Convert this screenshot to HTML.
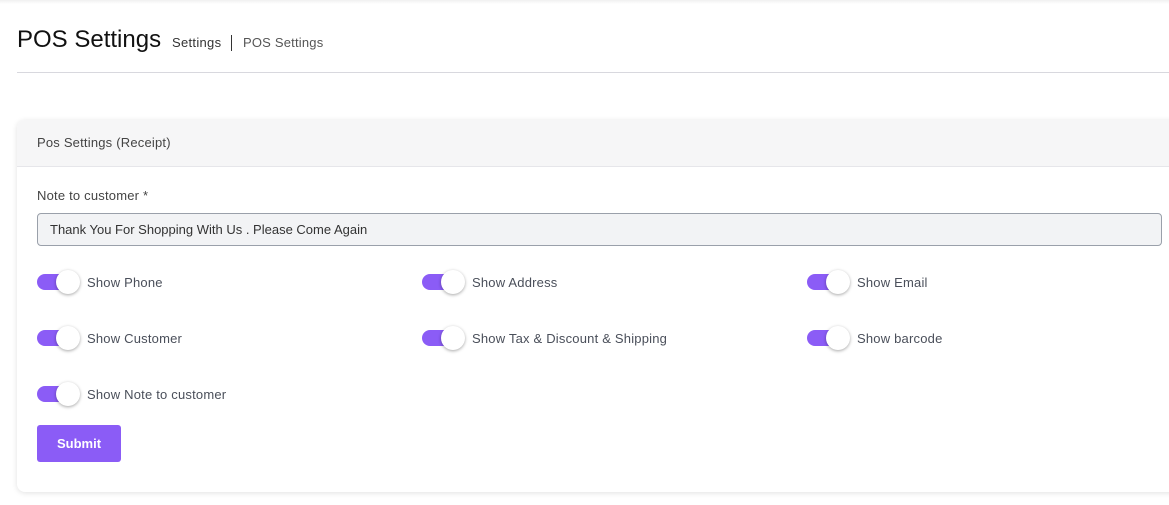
<!DOCTYPE html>
<html><head><style>
body{margin:0;background:#fff;font-family:"Liberation Sans",sans-serif;color:#3a3f4a;width:1169px;height:505px;overflow:hidden;position:relative}
.t{position:absolute;white-space:nowrap}
.card{position:absolute;left:17px;top:120px;width:1170px;height:372px;border-radius:8px;background:#fff;box-shadow:0 1px 6px rgba(0,0,0,.12);overflow:hidden}
.hd{height:46px;background:#f6f6f7;border-bottom:1px solid #e6e6ea}
.tg{position:absolute;width:30px;height:16px;border-radius:8px;background:#8b5cf6}
.tg::after{content:"";position:absolute;left:19px;top:-4px;width:24px;height:24px;border-radius:50%;background:#fff;box-shadow:0 1px 3px rgba(0,0,0,.35)}
.lb{position:absolute;font-size:13px;color:#4a4f5a;white-space:nowrap;letter-spacing:.2px}
</style></head><body>
<div style="position:absolute;left:0;top:0;width:1169px;height:4px;background:linear-gradient(#f0f0f0,#fff)"></div>
<div class="t" style="left:17px;top:26px;font-size:24px;color:#111">POS Settings</div>
<div class="t" style="left:172px;top:35px;font-size:13px;color:#333;letter-spacing:.3px">Settings</div>
<div style="position:absolute;left:231px;top:35px;width:1px;height:16px;background:#333"></div>
<div class="t" style="left:243px;top:35px;font-size:13px;color:#555;letter-spacing:.2px">POS Settings</div>
<div style="position:absolute;left:17px;top:72px;width:1152px;height:1px;background:#d8d8de"></div>
<div class="card"><div class="hd"></div></div>
<div class="t" style="left:37px;top:135px;font-size:13px;color:#444;letter-spacing:.2px">Pos Settings (Receipt)</div>
<div class="t" style="left:37px;top:188px;font-size:13px;color:#444;letter-spacing:.2px">Note to customer *</div>
<div style="position:absolute;left:37px;top:213px;width:1125px;height:33px;box-sizing:border-box;border:1px solid #9aa0aa;border-radius:4px;background:#f2f3f5"></div>
<div class="t" style="left:50px;top:222px;font-size:13px;color:#333">Thank You For Shopping With Us . Please Come Again</div>

<div class="tg" style="left:37px;top:274px"></div><div class="lb" style="left:87px;top:275px">Show Phone</div>
<div class="tg" style="left:422px;top:274px"></div><div class="lb" style="left:472px;top:275px">Show Address</div>
<div class="tg" style="left:807px;top:274px"></div><div class="lb" style="left:857px;top:275px">Show Email</div>
<div class="tg" style="left:37px;top:330px"></div><div class="lb" style="left:87px;top:331px">Show Customer</div>
<div class="tg" style="left:422px;top:330px"></div><div class="lb" style="left:472px;top:331px">Show Tax &amp; Discount &amp; Shipping</div>
<div class="tg" style="left:807px;top:330px"></div><div class="lb" style="left:857px;top:331px">Show barcode</div>
<div class="tg" style="left:37px;top:386px"></div><div class="lb" style="left:87px;top:387px">Show Note to customer</div>

<div style="position:absolute;left:37px;top:425px;width:84px;height:37px;border-radius:3px;background:#8b5cf6;color:#fff;font-size:13px;font-weight:bold;text-align:center;line-height:37px">Submit</div>
</body></html>
